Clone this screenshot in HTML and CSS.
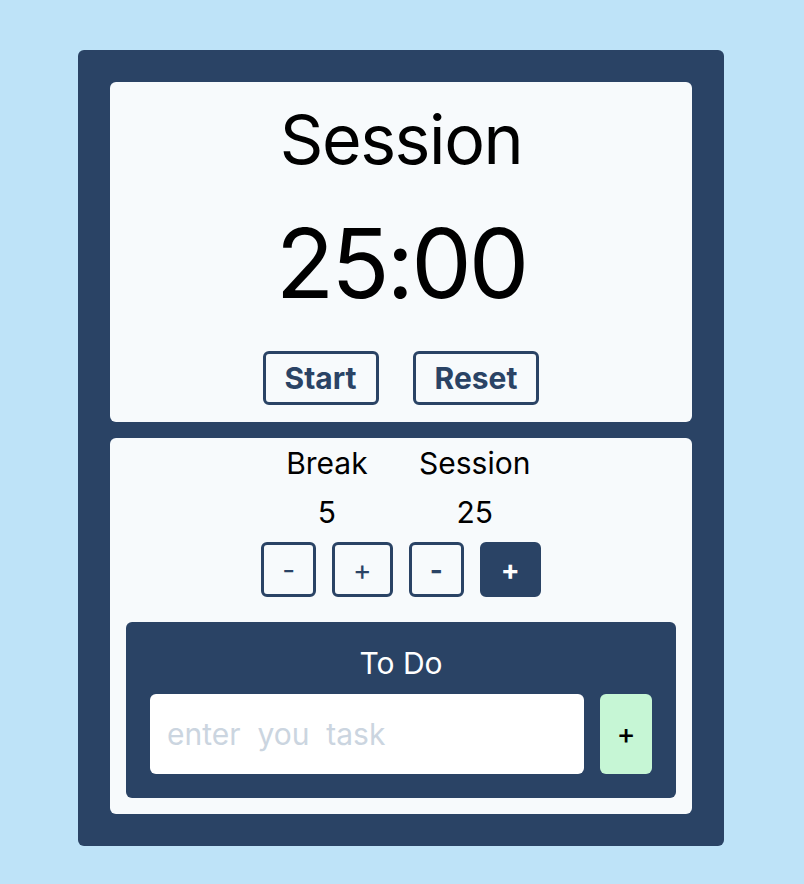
FILE: index.html
```html
<!DOCTYPE html>
<html lang="en">
<head>
<meta charset="utf-8">
<title>Pomodoro</title>
<link rel="stylesheet" href="styles.css">
</head>
<body>
<main class="app">
  <section class="panel timer">
    <h1 class="timer-label">Session</h1>
    <div class="timer-time">25:00</div>
    <div class="timer-actions">
      <button class="btn">Start</button>
      <button class="btn">Reset</button>
    </div>
  </section>
  <section class="panel settings">
    <div class="lengths">
      <div class="length">
        <div class="length-label">Break</div>
        <div class="length-value">5</div>
        <div class="length-controls">
          <button class="step">-</button>
          <button class="step">+</button>
        </div>
      </div>
      <div class="length">
        <div class="length-label">Session</div>
        <div class="length-value">25</div>
        <div class="length-controls">
          <button class="step step-bold">-</button>
          <button class="step step-bold step-active">+</button>
        </div>
      </div>
    </div>
    <div class="todo">
      <h2 class="todo-title">To Do</h2>
      <div class="todo-row">
        <input class="todo-input" type="text" placeholder="enter&nbsp; you&nbsp; task">
        <button class="todo-add">+</button>
      </div>
    </div>
  </section>
</main>
</body>
</html>
```

FILE: styles.css
```css
* { box-sizing: border-box; }

html, body {
  margin: 0;
  padding: 0;
}

body {
  background: #bee3f8;
  font-family: Inter, "Noto Sans", sans-serif;
  color: #000;
  padding-top: 50px;
  height: 884px;
}

.app {
  width: 646px;
  margin: 0 0 0 78px;
  background: #2a4365;
  border-radius: 6px;
  padding: 32px;
  display: flex;
  flex-direction: column;
  gap: 16px;
}

.panel {
  background: #f7fafc;
  border-radius: 6px;
}

.timer {
  height: 340px;
  display: flex;
  flex-direction: column;
  align-items: center;
}

.timer-label {
  margin: 17px 0 0;
  font-size: 68px;
  font-weight: 400;
  line-height: 80px;
  letter-spacing: -1.4px;
}

.timer-time {
  margin-top: 34px;
  font-size: 96px;
  line-height: 100px;
  letter-spacing: -3px;
}

.timer-actions {
  margin-top: 38px;
  display: flex;
  gap: 34px;
}

.btn {
  height: 54px;
  padding: 0 19px;
  border: 3px solid #2a4365;
  border-radius: 6px;
  background: transparent;
  color: #2a4365;
  font-family: inherit;
  font-size: 30px;
  font-weight: 700;
}

.settings {
  height: 376px;
  padding: 7px 16px 16px;
  display: flex;
  flex-direction: column;
}

.lengths {
  display: flex;
  justify-content: center;
  gap: 16px;
}

.length {
  display: flex;
  flex-direction: column;
  align-items: center;
}

.length-label {
  font-size: 30px;
  line-height: 36px;
}

.length-value {
  margin-top: 13px;
  font-size: 30px;
  line-height: 36px;
}

.length-controls {
  margin-top: 12px;
  display: flex;
  gap: 16px;
}

.step {
  height: 55px;
  min-width: 54px;
  padding: 0 18px;
  border: 3px solid #2a4365;
  border-radius: 6px;
  background: transparent;
  color: #2a4365;
  font-family: inherit;
  font-size: 28px;
  font-weight: 400;
}

.step-bold { font-weight: 700; }

.step-active {
  background: #2a4365;
  color: #fff;
}

.todo {
  margin-top: 25px;
  background: #2a4365;
  border-radius: 6px;
  padding: 24px;
}

.todo-title {
  margin: 0;
  text-align: center;
  color: #fff;
  font-size: 30px;
  font-weight: 400;
  line-height: 34px;
}

.todo-row {
  margin-top: 14px;
  display: flex;
  gap: 16px;
}

.todo-input {
  flex: 1 1 auto;
  min-width: 0;
  height: 80px;
  border: none;
  border-radius: 6px;
  background: #fff;
  padding: 0 17px;
  font-family: inherit;
  font-size: 30px;
  outline: none;
}

.todo-input::placeholder {
  color: #cbd5e0;
}

.todo-add {
  flex: 0 0 52px;
  width: 52px;
  height: 80px;
  border: none;
  border-radius: 6px;
  background: #c6f6d5;
  color: #000;
  font-family: inherit;
  font-size: 28px;
  font-weight: 500;
  padding: 0;
}
```
